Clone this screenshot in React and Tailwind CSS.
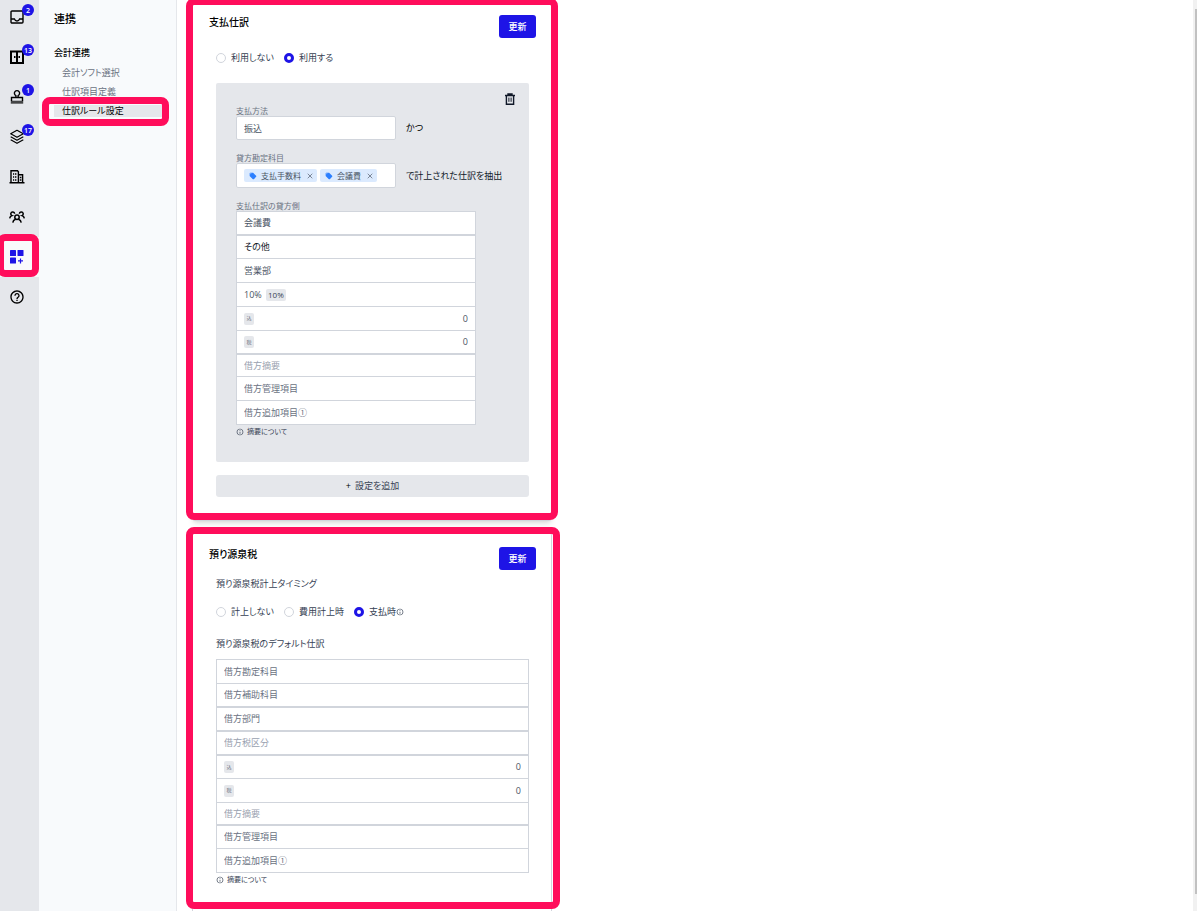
import { LuX } from "react-icons/lu";
import { MdHelpOutline, MdLocalOffer, MdOutlineInfo } from "react-icons/md";

const iconProps = {
  width: 16,
  height: 16,
  viewBox: "0 0 16 16",
  fill: "none",
  stroke: "currentColor",
  strokeWidth: 1.4,
};

const InboxIcon = () => (
  <svg {...iconProps}>
    <rect x="2" y="2" width="12" height="12" rx="1" />
    <path d="M2 10h3.400c.5 1.300 1.400 2 2.600 2s2.100-.7 2.600-2H14" />
  </svg>
);

const DoorIcon = () => (
  <svg {...iconProps}>
    <rect x="2" y="2.500" width="12" height="11.500" strokeWidth="2" />
    <path d="M8 2v12" strokeWidth="2" />
    <path d="M5 8h1.500M9.500 8H11" strokeWidth="2" />
  </svg>
);

const StampIcon = () => (
  <svg {...iconProps}>
    <path d="M6.900 8.300V6.600a2.600 2.600 0 1 1 2.200 0v1.700" />
    <path d="M2.500 12V8.500h11V12" />
    <path d="M1.800 13.200h12.400" strokeWidth="3" className="opacity-70" />
  </svg>
);

const LayersIcon = () => (
  <svg {...iconProps} strokeWidth="1.200" strokeLinejoin="round">
    <path d="M8 1.300l6.300 3.500L8 8.300 1.700 4.800z" />
    <path d="M1.700 7.800L8 11.300l6.300-3.500M1.700 10.800L8 14.300l6.300-3.500" />
  </svg>
);

const BuildingIcon = () => (
  <svg {...iconProps} strokeWidth="1.400">
    <path d="M.5 13.800h15M2 13.800V1.800h6.500l.9.900v11.100M9.400 5.800h4.200v8" />
    <path d="M4 5h1.200M6 5h1.400M4 8h1.200M6 8h1.400M4 11h1.200M6 11h1.400M10.800 8.500h1.600M10.800 11h1.600" />
  </svg>
);

const TeamIcon = () => (
  <svg {...iconProps} strokeWidth="1.500">
    <circle cx="8" cy="8.300" r="2.200" />
    <path d="M3.800 13.600c.2-1.900 1.300-2.900 2.700-3.400M12.200 13.600c-.2-1.900-1.300-2.900-2.700-3.400" />
    <path d="M5.600 4.800A1.900 1.900 0 1 0 3 6.600C1.600 7 .9 8 .7 9.400M10.400 4.800A1.900 1.900 0 1 1 13 6.600c1.400.4 2.100 1.400 2.300 2.800" />
  </svg>
);

const AppsIcon = () => (
  <svg width="16" height="16" viewBox="0 0 16 16" fill="currentColor">
    <rect x="1" y="1" width="6" height="6" rx=".6" />
    <rect x="8.500" y="1" width="6" height="6" rx=".6" />
    <rect x="1" y="8.500" width="6" height="6" rx=".6" />
    <path d="M10.900 9.400h1.200v1.900h1.900v1.200h-1.900v1.900h-1.200v-1.900H9v-1.200h1.900z" />
  </svg>
);

const TrashIcon = () => (
  <svg width="12" height="12" viewBox="0 0 12 12" fill="none" stroke="currentColor">
    <path d="M1 2.500h10M4 2.500V1h4v1.500M2.400 2.500v8.700h7.200V2.500" strokeWidth="1.400" />
    <path d="M4.900 4.600v4.200M7.100 4.600v4.200" />
  </svg>
);

const railItems = [
  { label: "受信トレイ", icon: <InboxIcon />, badge: 2 },
  { label: "保管庫", icon: <DoorIcon />, badge: 13 },
  { label: "承認", icon: <StampIcon />, badge: 1 },
  { label: "仕訳", icon: <LayersIcon />, badge: 17 },
  { label: "取引先", icon: <BuildingIcon /> },
  { label: "メンバー", icon: <TeamIcon /> },
  { label: "連携", icon: <AppsIcon />, active: true },
  { label: "ヘルプ", icon: <MdHelpOutline size={16} /> },
];

const menuItems = [
  { label: "会計ソフト選択" },
  { label: "仕訳項目定義" },
  { label: "仕訳ルール設定", active: true },
];

const creditRows = [
  { name: "貸方勘定科目", value: "会議費", height: "h-6", thick: true },
  { name: "貸方補助科目", value: "その他", height: "h-[23px]", dark: true },
  { name: "貸方部門", value: "営業部", height: "h-6" },
  { name: "貸方税区分", value: "10%", height: "h-6", rate: "10%" },
  { name: "税込金額", tag: "込", value: "0", height: "h-6" },
  { name: "税額", tag: "税", value: "0", height: "h-6", thick: true },
  { name: "借方摘要", height: "h-[22px]", light: true },
  { name: "借方管理項目", height: "h-6" },
  { name: "借方追加項目①", height: "h-6" },
];

const withholdingRows = [
  { name: "借方勘定科目", height: "h-6" },
  { name: "借方補助科目", height: "h-6", thick: true },
  { name: "借方部門", height: "h-6", thick: true },
  { name: "借方税区分", height: "h-6", light: true, thick: true },
  { name: "税込金額", tag: "込", value: "0", height: "h-[23px]" },
  { name: "税額", tag: "税", value: "0", height: "h-6" },
  { name: "借方摘要", height: "h-[23px]", light: true, thick: true },
  { name: "借方管理項目", height: "h-[23px]" },
  { name: "借方追加項目①", height: "h-6" },
];

function EntryRow({ row }) {
  return (
    <div
      className={`flex items-center border-gray-300 px-[7px] ${row.height} ${
        row.thick ? "border-b-2" : "border-b"
      }`}
    >
      {row.tag && (
        <span className="flex h-3 w-[10px] shrink-0 items-center justify-center rounded-[2px] bg-gray-200 text-[5px] leading-none text-gray-500">
          {row.tag}
        </span>
      )}
      <input
        aria-label={row.name}
        defaultValue={row.value}
        placeholder={row.name}
        className={`h-4 min-w-0 bg-transparent text-[9px] leading-4 outline-none ${
          row.rate ? "w-[22px]" : "flex-1"
        } ${row.tag ? "text-right" : ""} ${row.dark ? "text-gray-900" : "text-gray-600"} ${
          row.light ? "placeholder:text-gray-400" : "placeholder:text-gray-500"
        }`}
      />
      {row.rate && (
        <span className="rounded-[2px] bg-gray-200 px-[2px] text-[8px] leading-3 text-gray-700">
          {row.rate}
        </span>
      )}
    </div>
  );
}

function EntryTable({ rows }) {
  return (
    <div className="border-x border-t border-gray-300 bg-white">
      {rows.map((row) => (
        <EntryRow key={row.name} row={row} />
      ))}
    </div>
  );
}

function RadioOption({ name, label, info, checked }) {
  return (
    <label className="flex items-center gap-[5px] text-[9px] leading-4 text-gray-700">
      <input
        type="radio"
        name={name}
        defaultChecked={checked}
        className="size-[10px] appearance-none rounded-full border border-gray-300 bg-white checked:border-[3px] checked:border-[#1e14e6]"
      />
      <span className="flex items-center">
        {label}
        {info && <MdOutlineInfo size={8} />}
      </span>
    </label>
  );
}

function CardHeader({ title }) {
  return (
    <div className="flex h-[23px] items-start justify-between">
      <h2 className="text-[10px] leading-[14px] font-medium text-black">{title}</h2>
      <button className="h-[23px] w-[37px] rounded-[3px] bg-[#1e14e6] text-[9px] leading-4 font-medium text-white">
        更新
      </button>
    </div>
  );
}

function SummaryNote() {
  return (
    <a href="#summary" className="mt-[2px] flex items-center gap-[3px] text-[7px] leading-[10px] text-gray-700">
      <MdOutlineInfo size={8} />
      摘要について
    </a>
  );
}

function Chip({ label }) {
  return (
    <span className="flex h-[13px] items-center rounded-[2px] bg-blue-100 pr-[3px] pl-[5px] text-[8px] leading-3 text-gray-600">
      <MdLocalOffer size={8} className="mr-1 text-blue-500" />
      {label}
      <button aria-label={`${label}を外す`} className="ml-[5px]">
        <LuX size={8} />
      </button>
    </span>
  );
}

function PaymentCard() {
  return (
    <section className="relative rounded-[3px] border border-gray-300 bg-white pt-[14px] pr-[15px] pb-[23px] pl-4 shadow-md">
      <CardHeader title="支払仕訳" />
      <div className="px-[7px]">
        <div className="mt-3 flex gap-[10px]">
          <RadioOption name="payment" label="利用しない" />
          <RadioOption name="payment" label="利用する" checked />
        </div>

        <div className="mt-[17px] rounded-[2px] bg-gray-200 pt-[10px] pb-[25px] pl-5">
          <div className="flex justify-end pr-[13px]">
            <button aria-label="削除" className="text-gray-900">
              <TrashIcon />
            </button>
          </div>

          <label htmlFor="method" className="mt-px block text-[8px] leading-[10px] text-gray-500">
            支払方法
          </label>
          <div className="flex items-center gap-[10px]">
            <input
              id="method"
              defaultValue="振込"
              className="h-6 w-[160px] rounded-[2px] border border-gray-300 bg-white px-[7px] text-[9px] text-gray-600 outline-none"
            />
            <span className="text-[9px] leading-4 text-black">かつ</span>
          </div>

          <label htmlFor="account" className="mt-[13px] block text-[8px] leading-[10px] text-gray-500">
            貸方勘定科目
          </label>
          <div className="flex items-center gap-[10px]">
            <div className="flex h-[25px] w-[160px] items-center gap-[3px] rounded-[2px] border border-gray-300 bg-white px-[7px]">
              <Chip label="支払手数料" />
              <Chip label="会議費" />
              <input id="account" className="h-4 w-0 min-w-0 flex-1 text-[9px] outline-none" />
            </div>
            <span className="text-[9px] leading-4 text-gray-900">で計上された仕訳を抽出</span>
          </div>

          <p className="mt-[13px] text-[8px] leading-[10px] text-gray-500">支払仕訳の貸方側</p>
          <div className="w-[240px]">
            <EntryTable rows={creditRows} />
          </div>
          <SummaryNote />
        </div>

        <button className="mt-[13px] flex h-[22px] w-full items-center justify-center gap-1 rounded-[3px] bg-gray-200 text-[9px] leading-4 text-gray-700">
          <span className="text-black">+</span>
          設定を追加
        </button>
      </div>
      <div className="pointer-events-none absolute -top-[3px] -right-[7px] bottom-0 -left-[7px] rounded-lg border-[7px] border-[#ff0d5b]" />
    </section>
  );
}

function WithholdingCard() {
  return (
    <section className="relative rounded-[3px] border border-gray-300 bg-white pt-[14px] pr-[15px] pb-16 pl-4">
      <CardHeader title="預り源泉税" />
      <div className="px-[7px]">
        <h3 className="mt-[6px] text-[9px] leading-4 text-gray-700">預り源泉税計上タイミング</h3>
        <div className="mt-3 flex gap-[10px]">
          <RadioOption name="withholding" label="計上しない" />
          <RadioOption name="withholding" label="費用計上時" />
          <RadioOption name="withholding" label="支払時" info checked />
        </div>
        <h3 className="mt-4 mb-[7px] text-[9px] leading-4 text-gray-700">預り源泉税のデフォルト仕訳</h3>
        <EntryTable rows={withholdingRows} />
        <SummaryNote />
      </div>
      <div className="pointer-events-none absolute -top-[6px] -right-[9px] bottom-10 -left-[7px] rounded-lg border-[7px] border-[#ff0d5b]" />
    </section>
  );
}

export default function App() {
  return (
    <div
      lang="ja"
      className="flex h-screen overflow-hidden bg-white font-['Open_Sans','Noto_Sans_CJK_JP',sans-serif] [font-feature-settings:'palt']"
    >
      <nav className="w-[39px] shrink-0 bg-gray-200">
        <ul className="-mt-[3px]">
          {railItems.map((item) => (
            <li key={item.label} className={`relative h-10 ${item.active ? "bg-gray-50" : ""}`}>
              <a
                href="#"
                aria-label={item.label}
                className={`flex h-full w-[34px] items-center justify-center ${
                  item.active ? "text-[#1e14e6]" : "text-black"
                }`}
              >
                {item.icon}
              </a>
              {item.badge && (
                <span className="absolute top-[7px] right-[5px] flex size-3 items-center justify-center rounded-full bg-[#1e14e6] text-[7px] leading-none font-semibold text-white">
                  {item.badge}
                </span>
              )}
              {item.active && (
                <div className="pointer-events-none absolute -top-[3px] right-0 bottom-0 -left-[3px] z-10 rounded-lg border-[7px] border-[#ff0d5b]" />
              )}
            </li>
          ))}
        </ul>
      </nav>

      <aside className="w-[138px] shrink-0 border-r border-gray-200 bg-slate-50 pt-[11px] pr-[14px] pl-[15px]">
        <h1 className="text-[11px] leading-4 font-medium text-black">連携</h1>
        <h2 className="mt-[18px] text-[9px] leading-4 font-medium text-black">会計連携</h2>
        <ul className="mt-[2px]">
          {menuItems.map((item) => (
            <li key={item.label} className="relative flex h-[19px] items-center">
              <a
                href="#"
                className={`block w-full pl-2 text-[9px] leading-3 ${
                  item.active ? "bg-gray-200 text-black" : "text-gray-500"
                }`}
              >
                {item.label}
              </a>
              {item.active && (
                <div className="pointer-events-none absolute -top-1 -right-[7px] -bottom-[6px] -left-3 rounded-lg border-[7px] border-[#ff0d5b]" />
              )}
            </li>
          ))}
        </ul>
      </aside>

      <main className="min-w-0 flex-1 pl-[15px]">
        <div className="flex w-full max-w-[360px] flex-col gap-[11px]">
          <PaymentCard />
          <WithholdingCard />
        </div>
      </main>

      <div className="flex w-1 shrink-0 justify-end bg-[#f1f1f1] pt-[9px] pb-[17px]">
        <div className="w-[2px] bg-[#c1c1c1]" />
      </div>
    </div>
  );
}
